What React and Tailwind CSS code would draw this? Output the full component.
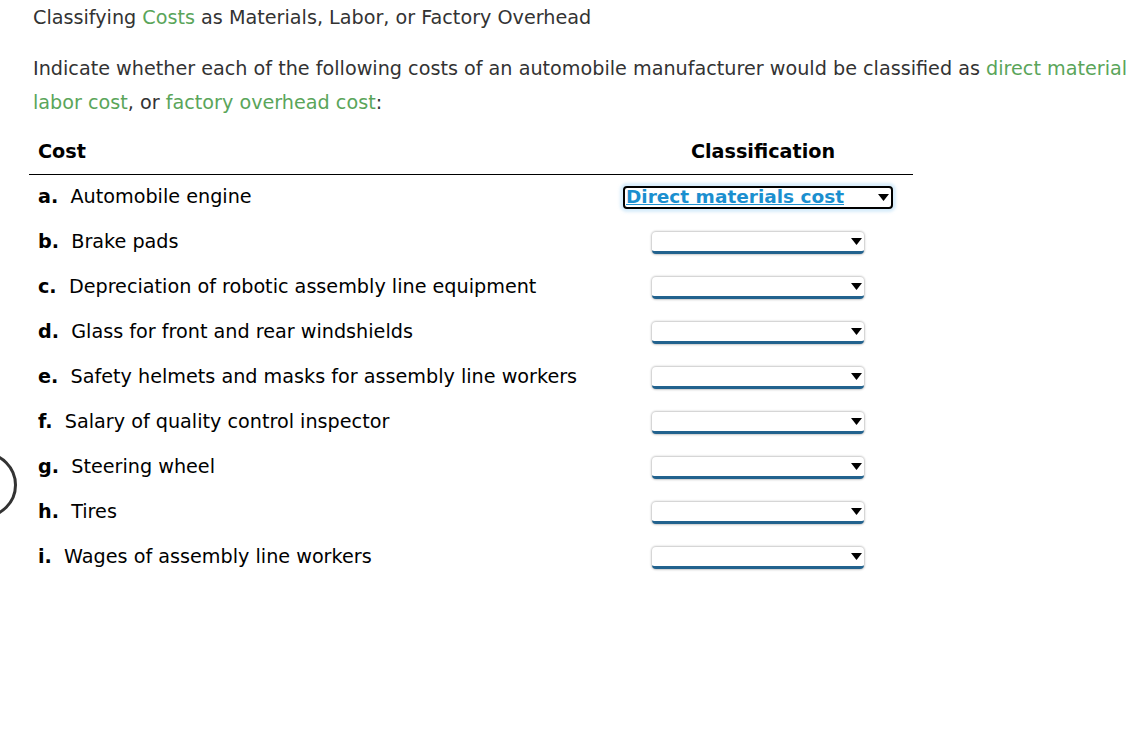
import React from "react";

const rows = [
  ["a.", "Automobile engine"],
  ["b.", "Brake pads"],
  ["c.", "Depreciation of robotic assembly line equipment"],
  ["d.", "Glass for front and rear windshields"],
  ["e.", "Safety helmets and masks for assembly line workers"],
  ["f.", "Salary of quality control inspector"],
  ["g.", "Steering wheel"],
  ["h.", "Tires"],
  ["i.", "Wages of assembly line workers"],
];

function Arrow() {
  return (
    <svg width="11" height="7" viewBox="0 0 11 7" className="shrink-0">
      <polygon points="0,0 11,0 5.5,7" fill="#000" />
    </svg>
  );
}

function EmptySelect() {
  return (
    <div className="w-[212px] h-[22px] bg-white rounded-[4px] border-b-[3px] border-b-[#22628e] shadow-[0_0_2px_1px_rgba(0,0,0,0.22)] flex items-center justify-end pr-[2px]">
      <Arrow />
    </div>
  );
}

function FocusedSelect() {
  return (
    <div className="w-[270px] h-[23px] bg-white rounded-[4px] border-2 border-black shadow-[0_0_3px_3px_rgba(140,200,240,0.35)] flex items-center justify-between pl-[1px] pr-[2px] overflow-hidden">
      <span className="font-bold underline text-[#1b8fcf] text-[18.5px] leading-none whitespace-nowrap">
        Direct materials cost
      </span>
      <Arrow />
    </div>
  );
}

export default function App() {
  return (
    <div
      className="relative w-[1126px] h-[756px] overflow-hidden bg-white text-[19.2px]"
      style={{ fontFamily: "'DejaVu Sans', Verdana, sans-serif" }}
    >
      <div className="absolute left-[-49px] top-[452px] w-[66px] h-[66px] rounded-full border-[3px] border-[#333]" />
      <div className="pl-[33px] pt-[5px] w-[1400px]">
        <div className="text-[#333] leading-[26px]">
          Classifying <span className="text-[#5aa55a]">Costs</span> as Materials, Labor, or Factory Overhead
        </div>
        <p className="text-[#333] leading-[34px] mt-[21px] whitespace-nowrap">
          Indicate whether each of the following costs of an automobile manufacturer would be classified as{" "}
          <span className="text-[#5aa55a]">direct materials cost</span>,{" "}
          <span className="text-[#5aa55a]">direct</span>
          <br />
          <span className="text-[#5aa55a]">labor cost</span>, or{" "}
          <span className="text-[#5aa55a]">factory overhead cost</span>:
        </p>
        <div className="w-[884px] ml-[-4px] mt-[6px]">
          <div className="flex items-end h-[49px] border-b border-black pb-[9px]">
            <div className="flex-1 pl-[9px] font-bold text-black leading-[26px]">Cost</div>
            <div className="w-[300px] text-center font-bold text-black leading-[26px]">Classification</div>
          </div>
          {rows.map(([l, t], i) => (
            <div key={l} className="flex items-center h-[45px]">
              <div className="flex-1 pl-[9px] pb-[2px] text-black whitespace-nowrap leading-[26px]">
                <span className="font-bold">{l}</span>&nbsp; {t}
              </div>
              <div className="w-[300px] flex justify-center pr-[10px]">
                {i === 0 ? <FocusedSelect /> : <EmptySelect />}
              </div>
            </div>
          ))}
        </div>
      </div>
    </div>
  );
}
